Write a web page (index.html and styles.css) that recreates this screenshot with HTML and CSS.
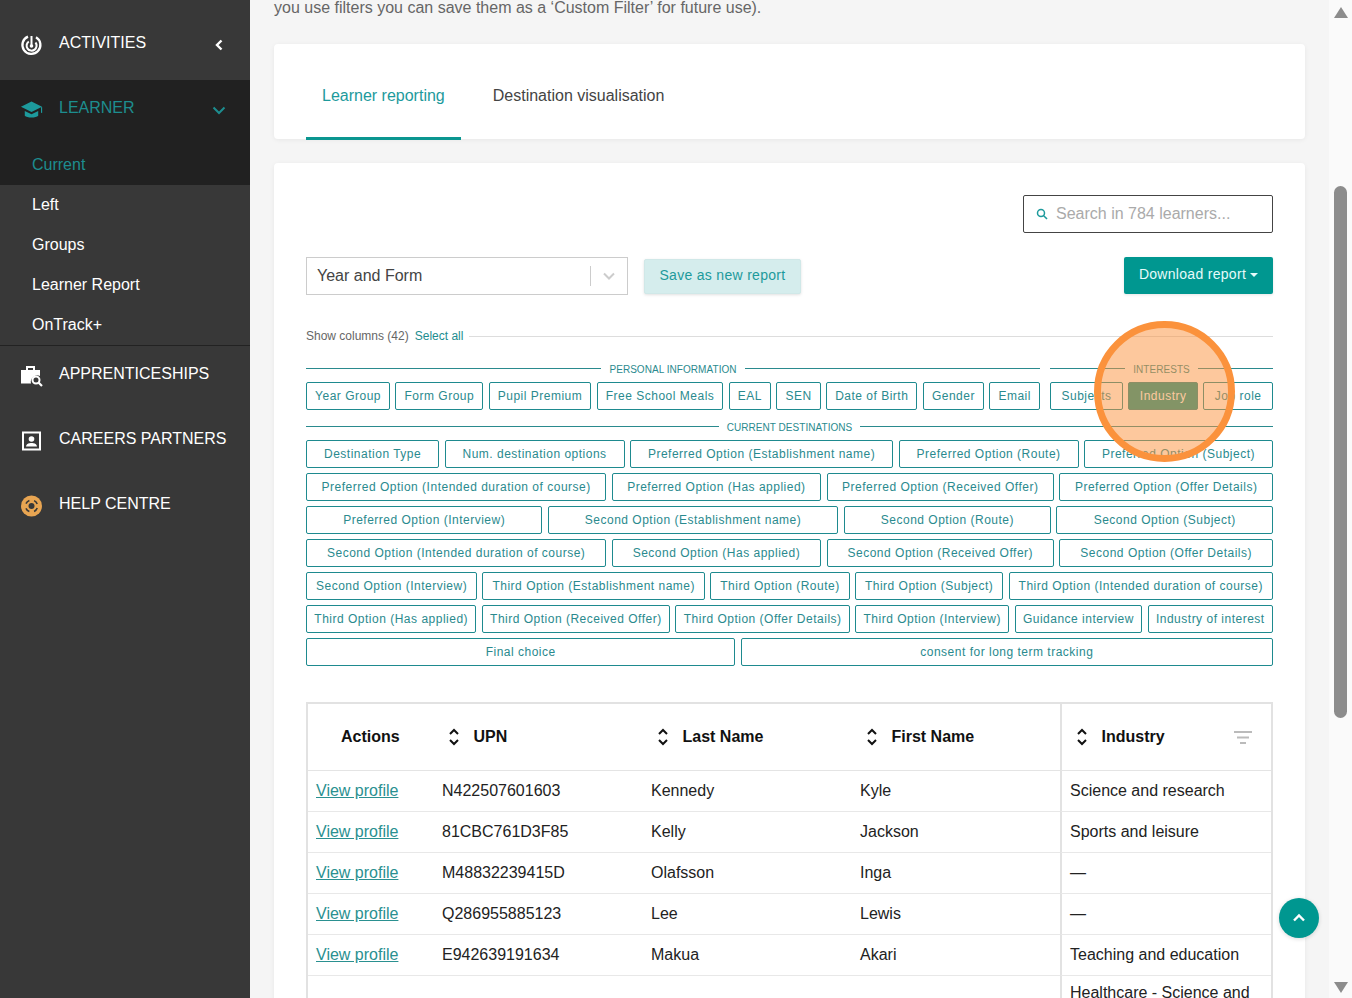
FILE: index.html
```html
<!DOCTYPE html>
<html lang="en">
<head>
<meta charset="utf-8">
<title>Learner reporting</title>
<link rel="stylesheet" href="styles.css">
</head>
<body>
<div class="app">
  <nav class="sidebar">
    <a class="nav-item">
      <svg class="nav-icon" viewBox="0 0 22 22"><path d="M7.500 2.600A9 9 0 1 0 15.500 3.200" fill="none" stroke="#fff" stroke-width="2.300"/><path d="M8.300 7.500A5 5 0 1 0 15 8.500" fill="none" stroke="#fff" stroke-width="2"/><path d="M11 2v9.500" stroke="#fff" stroke-width="2"/><circle cx="11" cy="12" r="1.800" fill="#fff"/></svg>
      <span class="nav-label">ACTIVITIES</span>
      <svg class="nav-chev" viewBox="0 0 14 14"><path d="M9.500 2.500L5 7l4.500 4.500" fill="none" stroke="#fff" stroke-width="2.400"/></svg>
    </a>
    <div class="nav-open">
      <a class="nav-item nav-item-active">
        <svg class="nav-icon" viewBox="0 0 24 22"><path d="M12 2L1 7.500 12 13l11-5.500z" fill="#1d9a9c"/><path d="M5 12v5c2 2.500 12 2.500 14 0v-5l-7 3.500z" fill="#1d9a9c"/><path d="M22.500 8v6" stroke="#1d9a9c" stroke-width="1.200"/></svg>
        <span class="nav-label">LEARNER</span>
        <svg class="nav-chev" viewBox="0 0 14 14"><path d="M1.500 4.500L7 10l5.500-5.500" fill="none" stroke="#1d8d8f" stroke-width="2"/></svg>
      </a>
      <a class="sub-item sub-item-active">Current</a>
    </div>
    <a class="sub-item">Left</a>
    <a class="sub-item">Groups</a>
    <a class="sub-item">Learner Report</a>
    <a class="sub-item">OnTrack+</a>
    <div class="nav-rule"></div>
    <a class="nav-item">
      <svg class="nav-icon" viewBox="0 0 22 22"><path d="M6.500 5V2h7v3" fill="none" stroke="#fff" stroke-width="2"/><path d="M0.500 5h19v6a6.500 6.500 0 0 0-9 7.500H0.500z" fill="#fff"/><circle cx="15.500" cy="15" r="3.500" fill="none" stroke="#fff" stroke-width="2"/><path d="M18 17.500l3.500 3.500" stroke="#fff" stroke-width="2.200"/></svg>
      <span class="nav-label">APPRENTICESHIPS</span>
    </a>
    <a class="nav-item">
      <svg class="nav-icon" viewBox="0 0 22 22"><rect x="2.500" y="2.500" width="17" height="17" fill="none" stroke="#fff" stroke-width="2"/><circle cx="11" cy="9" r="2.800" fill="#fff"/><path d="M5.500 16.500c.5-3 3-3.500 5.500-3.500s5 .5 5.500 3.500z" fill="#fff"/></svg>
      <span class="nav-label">CAREERS PARTNERS</span>
    </a>
    <a class="nav-item">
      <svg class="nav-icon" viewBox="0 0 22 22"><circle cx="11" cy="11" r="10.500" fill="#e8a552"/><circle cx="11" cy="11" r="3" fill="#383838"/><circle cx="11" cy="11" r="6" fill="none" stroke="#383838" stroke-width="1.600" stroke-dasharray="4.500 4.925" stroke-dashoffset="-2.200" transform="rotate(-2 11 11)"/></svg>
      <span class="nav-label">HELP CENTRE</span>
    </a>
  </nav>

  <main class="main">
    <p class="intro">you use filters you can save them as a ‘Custom Filter’ for future use).</p>

    <section class="card tabs">
      <a class="tab tab-active">Learner reporting</a>
      <a class="tab">Destination visualisation</a>
    </section>

    <section class="card report">
      <div class="search-row">
        <div class="search">
          <svg class="search-icon" viewBox="0 0 12 12"><circle cx="5" cy="5" r="3.500" fill="none" stroke="#1d9a9c" stroke-width="1.500"/><path d="M7.700 7.700L11 11" stroke="#1d9a9c" stroke-width="1.600"/></svg>
          <span>Search in 784 learners...</span>
        </div>
      </div>

      <div class="toolbar">
        <div class="select">
          <span class="select-value">Year and Form</span>
          <span class="select-sep"></span>
          <svg class="select-chev" viewBox="0 0 12 8"><path d="M1 1.500l5 5 5-5" fill="none" stroke="#ccc" stroke-width="2"/></svg>
        </div>
        <button class="btn-save">Save as new report</button>
        <button class="btn-download">Download report<span class="caret"></span></button>
      </div>

      <div class="columns-head">
        <span class="columns-count">Show columns (42)</span>
        <a class="select-all">Select all</a>
        <span class="columns-line"></span>
      </div>

      <div class="groups-top">
        <div class="group group-personal">
          <div class="group-label">PERSONAL INFORMATION</div>
          <div class="tags">
            <span class="tag">Year Group</span><span class="tag">Form Group</span><span class="tag">Pupil Premium</span><span class="tag">Free School Meals</span><span class="tag">EAL</span><span class="tag">SEN</span><span class="tag">Date of Birth</span><span class="tag">Gender</span><span class="tag">Email</span>
          </div>
        </div>
        <div class="group group-interests">
          <div class="group-label">INTERESTS</div>
          <div class="tags">
            <span class="tag">Subjects</span><span class="tag tag-on">Industry</span><span class="tag">Job role</span>
          </div>
        </div>
      </div>

      <div class="group group-dest">
        <div class="group-label">CURRENT DESTINATIONS</div>
        <div class="tags">
          <span class="tag">Destination Type</span><span class="tag">Num. destination options</span><span class="tag">Preferred Option (Establishment name)</span><span class="tag">Preferred Option (Route)</span><span class="tag">Preferred Option (Subject)</span><span class="tag">Preferred Option (Intended duration of course)</span><span class="tag">Preferred Option (Has applied)</span><span class="tag">Preferred Option (Received Offer)</span><span class="tag">Preferred Option (Offer Details)</span><span class="tag">Preferred Option (Interview)</span><span class="tag">Second Option (Establishment name)</span><span class="tag">Second Option (Route)</span><span class="tag">Second Option (Subject)</span><span class="tag">Second Option (Intended duration of course)</span><span class="tag">Second Option (Has applied)</span><span class="tag">Second Option (Received Offer)</span><span class="tag">Second Option (Offer Details)</span><span class="tag">Second Option (Interview)</span><span class="tag">Third Option (Establishment name)</span><span class="tag">Third Option (Route)</span><span class="tag">Third Option (Subject)</span><span class="tag">Third Option (Intended duration of course)</span><span class="tag">Third Option (Has applied)</span><span class="tag">Third Option (Received Offer)</span><span class="tag">Third Option (Offer Details)</span><span class="tag">Third Option (Interview)</span><span class="tag">Guidance interview</span><span class="tag">Industry of interest</span><span class="tag">Final choice</span><span class="tag">consent for long term tracking</span>
        </div>
      </div>

      <table class="learners">
        <colgroup><col class="c-actions"><col class="c-name"><col class="c-name"><col class="c-last"><col></colgroup>
        <thead>
          <tr>
            <th class="th-actions">Actions</th>
            <th><div class="th-in"><svg class="sort" viewBox="0 0 12 18"><path d="M2 6l4-4 4 4M2 12l4 4 4-4" fill="none" stroke="#111" stroke-width="2"/></svg>UPN</div></th>
            <th><div class="th-in"><svg class="sort" viewBox="0 0 12 18"><path d="M2 6l4-4 4 4M2 12l4 4 4-4" fill="none" stroke="#111" stroke-width="2"/></svg>Last Name</div></th>
            <th><div class="th-in"><svg class="sort" viewBox="0 0 12 18"><path d="M2 6l4-4 4 4M2 12l4 4 4-4" fill="none" stroke="#111" stroke-width="2"/></svg>First Name</div></th>
            <th class="col-ind"><div class="th-in"><svg class="sort" viewBox="0 0 12 18"><path d="M2 6l4-4 4 4M2 12l4 4 4-4" fill="none" stroke="#111" stroke-width="2"/></svg>Industry<svg class="filter" viewBox="0 0 18 14"><path d="M0 1h18M3 6.500h12M6 12h6" stroke="#bbb" stroke-width="2"/></svg></div></th>
          </tr>
        </thead>
        <tbody>
          <tr><td><a class="link">View profile</a></td><td>N422507601603</td><td>Kennedy</td><td>Kyle</td><td class="col-ind">Science and research</td></tr>
          <tr><td><a class="link">View profile</a></td><td>81CBC761D3F85</td><td>Kelly</td><td>Jackson</td><td class="col-ind">Sports and leisure</td></tr>
          <tr><td><a class="link">View profile</a></td><td>M48832239415D</td><td>Olafsson</td><td>Inga</td><td class="col-ind">—</td></tr>
          <tr><td><a class="link">View profile</a></td><td>Q286955885123</td><td>Lee</td><td>Lewis</td><td class="col-ind">—</td></tr>
          <tr><td><a class="link">View profile</a></td><td>E942639191634</td><td>Makua</td><td>Akari</td><td class="col-ind">Teaching and education</td></tr>
          <tr class="row-tall"><td></td><td></td><td></td><td></td><td class="col-ind">Healthcare - Science and</td></tr>
        </tbody>
      </table>

      <div class="spotlight"></div>
    </section>

    <a class="to-top"><svg viewBox="0 0 14 10"><path d="M2 7.500L7 2.500l5 5" fill="none" stroke="#fff" stroke-width="2.400"/></svg></a>
  </main>

  <div class="scrollbar">
    <span class="arrow-up"></span>
    <span class="thumb"></span>
    <span class="arrow-down"></span>
  </div>
</div>
</body>
</html>
```

FILE: styles.css
```css
* { box-sizing: border-box; }
html, body { margin: 0; padding: 0; height: 100%; overflow: hidden; }
body { font-family: "Liberation Sans", Arial, sans-serif; font-size: 16px; color: #222; background: #f5f5f5; }
.app { display: flex; height: 998px; overflow: hidden; }

/* sidebar */
.sidebar { width: 250px; flex: none; background: #383838; padding-top: 15px; color: #fff; }
.nav-item { display: flex; align-items: center; height: 65px; padding: 0 24px 0 20px; color: #fff; }
.nav-icon { width: 23px; height: 22px; flex: none; margin: 0 16px 5px 0; }
.nav-label { padding-bottom: 10px; flex: 1; white-space: nowrap; }
.nav-chev { width: 14px; height: 14px; flex: none; margin-bottom: 5px; }
.nav-open { background: #212121; }
.nav-item-active { color: #1d8d8f; }
.sub-item { display: block; height: 40px; line-height: 40px; padding-left: 32px; color: #fff; }
.sub-item-active { color: #1d8d8f; }
.nav-rule { height: 1px; background: #222; }

/* main */
.main { flex: 1; min-width: 0; padding: 0 24px; }
.intro { margin: -3px 0 25px; line-height: 22px; color: #666; }
.card { background: #fff; border-radius: 4px; box-shadow: 0 1px 5px rgba(0, 0, 0, 0.06); }
.tabs { display: flex; height: 95px; padding: 0 32px; margin-bottom: 24px; }
.tab { display: flex; align-items: center; height: 96px; padding: 10px 16px 0; margin-right: 16px; color: #444; border-bottom: 3px solid transparent; }
.tab-active { color: #1d9a9c; border-bottom-color: #0a9690; }

.report { padding: 32px; position: relative; min-height: 900px; }
.search-row { display: flex; justify-content: flex-end; margin-bottom: 24px; }
.search { display: flex; align-items: center; width: 250px; height: 38px; border: 1px solid #444; border-radius: 2px; padding-left: 12px; color: #aaa; }
.search-icon { width: 12px; height: 12px; margin-right: 8px; }

.toolbar { display: flex; align-items: flex-start; }
.select { display: flex; align-items: center; width: 322px; height: 38px; border: 1px solid #ccc; padding: 0 11px 0 10px; color: #444; }
.select-value { flex: 1; }
.select-sep { width: 1px; height: 20px; background: #ccc; margin-right: 12px; }
.select-chev { width: 12px; height: 8px; margin-right: 1px; }
.btn-save { margin: 2px auto 0 16px; width: 157px; height: 35px; border: 1px solid #d0e8e8; border-radius: 2px; background: #d5eded; color: #1d9a9c; font: 14px "Liberation Sans", Arial, sans-serif; letter-spacing: 0.3px; box-shadow: 0 1px 3px rgba(0, 0, 0, 0.12); padding: 0 0 3px; }
.btn-download { width: 149px; height: 37px; border: 0; border-radius: 2px; background: #009790; color: #e6fbfa; font: 14px "Liberation Sans", Arial, sans-serif; letter-spacing: 0.3px; padding: 0 0 4px; box-shadow: 0 1px 3px rgba(0, 0, 0, 0.1); }
.caret { display: inline-block; margin-left: 4px; vertical-align: 2px; border-left: 4px solid transparent; border-right: 4px solid transparent; border-top: 4px solid #e6fbfa; }

.columns-head { display: flex; align-items: center; height: 16px; margin-top: 33px; font-size: 12px; }
.columns-count { color: #666; }
.select-all { color: #1d8d8f; margin-left: 6px; }
.columns-line { flex: 1; height: 1px; background: #ddd; margin-left: 6px; }

.groups-top { display: flex; gap: 10px; margin-top: 18px; }
.group-personal { flex: 1; min-width: 0; }
.group-interests { width: 223px; flex: none; }
.group-dest { margin-top: 10px; }
.group-label { display: flex; align-items: center; gap: 8px; height: 14px; margin-bottom: 6px; font-size: 10px; letter-spacing: 0.05px; color: #2a8a8e; white-space: nowrap; }
.group-label::before, .group-label::after { content: ""; flex: 1; height: 1px; background: #2a8a8e; margin-top: -2px; }
.tags { display: flex; flex-wrap: wrap; gap: 5px 5.3px; }
.tag { flex: 1 1 auto; height: 28px; line-height: 26px; padding: 0 7px; border: 1px solid #1e8a8f; border-radius: 2px; text-align: center; font-size: 12px; letter-spacing: 0.5px; color: #2a8a8e; white-space: nowrap; }
.tag-on { background: #0a9690; color: #fff; }

/* table */
.learners { width: 967px; margin-top: 36px; border-collapse: separate; border-spacing: 0; table-layout: fixed; border: 2px solid #e2e2e2; border-bottom: 0; color: #222; }
.c-actions { width: 126px; }
.c-name { width: 209px; }
.c-last { width: 208px; }
.learners th { height: 67px; padding: 0 0 0 12px; text-align: left; font-weight: 700; color: #111; border-bottom: 1px solid #e4e4e4; }
.learners .th-actions { padding-left: 33px; }
.th-in { display: flex; align-items: center; padding-bottom: 1px; }
.sort { width: 12px; height: 18px; flex: none; margin: 0 13.5px 0 2px; }
.filter { width: 18px; height: 14px; margin: 2px 19px 0 auto; }
.learners td { height: 41px; padding: 0 8px; border-bottom: 1px solid #e8e8e8; }
.learners .col-ind { border-left: 2px solid #e2e2e2; }
.learners th.col-ind { padding-left: 12px; }
.row-tall td { height: 60px; vertical-align: top; padding-top: 8px; }
.link { color: #2a9090; text-decoration: underline; }

.spotlight { position: absolute; left: 820px; top: 158px; width: 141px; height: 141px; border-radius: 50%; border: 7px solid #fb923c; background: rgba(251, 146, 60, 0.5); }
.to-top { position: absolute; left: 1279px; top: 898px; width: 40px; height: 40px; border-radius: 50%; background: #009790; display: flex; align-items: center; justify-content: center; box-shadow: 0 1px 4px rgba(0, 0, 0, 0.15); }
.to-top svg { width: 14px; height: 10px; }

/* scrollbar */
.scrollbar { width: 23px; flex: none; background: #fafafa; display: flex; flex-direction: column; align-items: center; padding-top: 7px; }
.arrow-up { border-left: 7px solid transparent; border-right: 7px solid transparent; border-bottom: 11px solid #8c8c8c; }
.thumb { width: 13px; height: 532px; margin-top: 168px; border-radius: 7px; background: #8c8c8c; }
.arrow-down { margin-top: 264px; border-left: 7px solid transparent; border-right: 7px solid transparent; border-top: 11px solid #8c8c8c; }
```
